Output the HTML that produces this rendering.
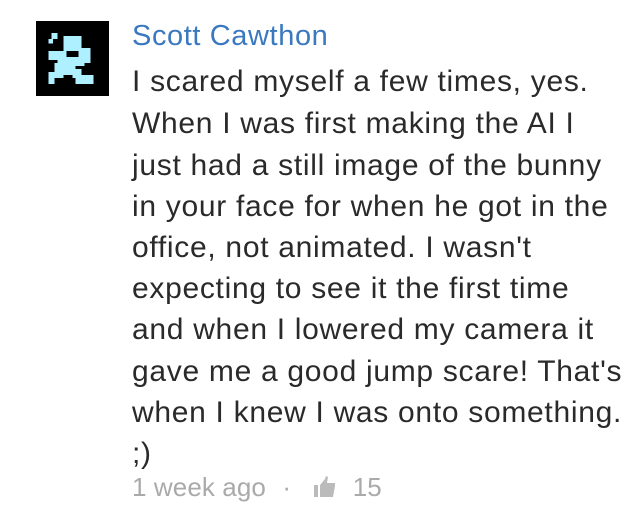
<!DOCTYPE html>
<html><head><style>
body{margin:0;width:642px;height:513px;background:#fff;position:relative;overflow:hidden;font-family:"Liberation Sans",sans-serif}
.av{position:absolute;left:36px;top:21px;width:73px;height:75px;background:#000}
.name{position:absolute;left:132px;top:20px;font-size:29px;color:#3a78c0;white-space:nowrap;letter-spacing:0.6px}
.l{position:absolute;left:132px;font-size:30px;color:#2a2a2a;white-space:nowrap;letter-spacing:0.7px}
.meta{position:absolute;left:132px;top:472px;font-size:26px;color:#aaa;white-space:nowrap;letter-spacing:0.1px}
</style></head><body>
<div class="av"><svg width="73" height="75" viewBox="0 0 24 25">
<g fill="#aef0ff">
<rect x="5" y="4" width="2" height="2"/><rect x="4" y="6" width="1.5" height="1.5"/>
<rect x="9" y="5" width="6" height="5"/>
<rect x="4" y="10" width="6" height="3"/><rect x="7" y="12" width="9" height="3"/>
<rect x="14" y="9" width="4" height="3"/><rect x="15" y="11" width="3" height="3"/>
<rect x="6" y="14" width="3" height="3"/><rect x="9" y="15" width="4" height="3"/>
<rect x="4" y="17" width="5" height="2"/><rect x="4" y="18" width="2" height="3"/>
<rect x="12" y="16" width="3" height="3"/><rect x="13" y="18" width="6" height="3"/>
</g></svg></div>
<div class="name">Scott Cawthon</div>
<div class="l" style="top:65px">I scared myself a few times, yes.</div>
<div class="l" style="top:107px">When I was first making the AI I</div>
<div class="l" style="top:149px">just had a still image of the bunny</div>
<div class="l" style="top:190px">in your face for when he got in the</div>
<div class="l" style="top:231px">office, not animated. I wasn't</div>
<div class="l" style="top:272px">expecting to see it the first time</div>
<div class="l" style="top:313px">and when I lowered my camera it</div>
<div class="l" style="top:355px">gave me a good jump scare! That's</div>
<div class="l" style="top:396px">when I knew I was onto something.</div>
<div class="l" style="top:437px">;)</div>
<div class="meta">1 week ago <span style="margin:0 9px">·</span> <svg width="24" height="22" viewBox="0 0 24 22" style="vertical-align:-2px;margin:0 8px 0 6px"><rect x="1" y="9" width="4" height="12" fill="#bbb"/><path d="M7 9 L12 3 L13 0 L15 1 L14 7 L22 7 L22 10 L20 21 L7 21 Z" fill="#bbb"/></svg> 15</div>
</body></html>
